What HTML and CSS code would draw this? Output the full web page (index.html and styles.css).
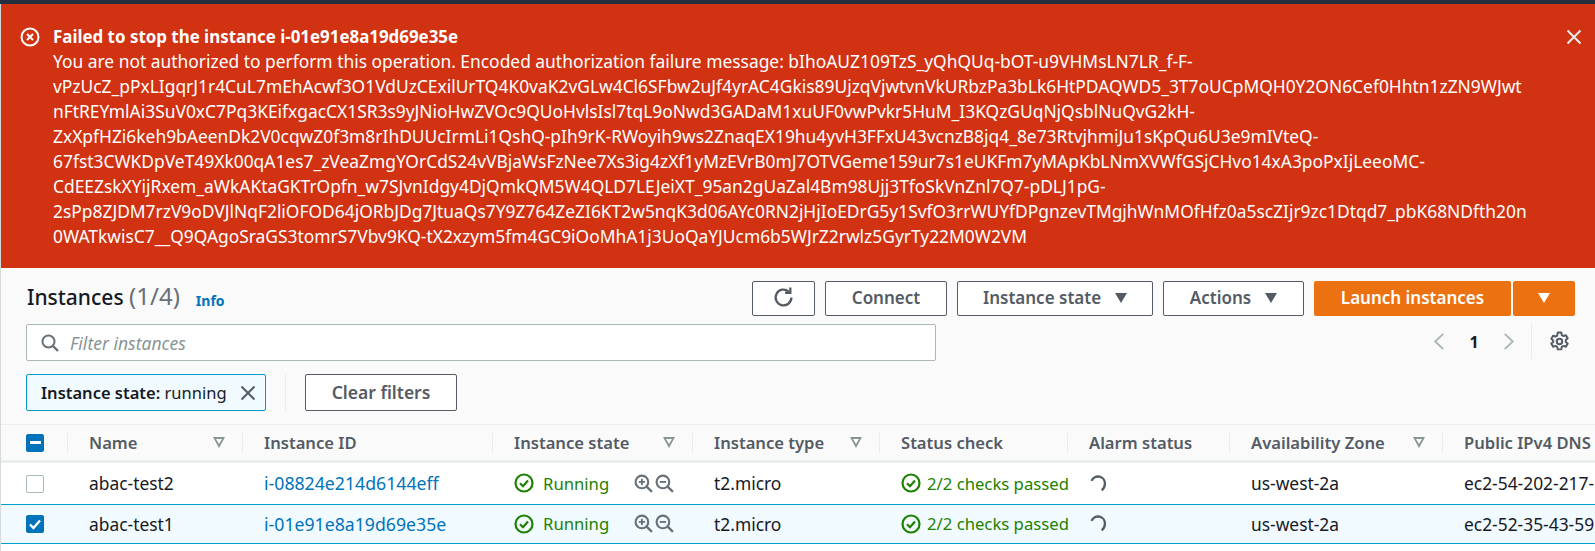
FILE: index.html
```html
<!DOCTYPE html>
<html>
<head>
<meta name="viewport" content="width=device-width, initial-scale=1">
<title>Instances</title>
<link rel="stylesheet" href="styles.css">
</head>
<body>

<div class="topbar"></div>

<div class="page">

  <!-- error flash -->
  <div class="flash">
    <svg class="flash-icon" viewBox="0 0 20 20"><circle cx="10" cy="10" r="8.500" fill="none" stroke="#fff" stroke-width="2"/><path d="M7 7l6 6M13 7l-6 6" fill="none" stroke="#fff" stroke-width="2"/></svg>
    <div class="flash-body">
      <div class="flash-title">Failed to stop the instance i-01e91e8a19d69e35e</div>
      <div class="flash-text">You are not authorized to perform this operation. Encoded authorization failure message: bIhoAUZ109TzS_yQhQUq-bOT-u9VHMsLN7LR_f-F-<br>vPzUcZ_pPxLIgqrJ1r4CuL7mEhAcwf3O1VdUzCExilUrTQ4K0vaK2vGLw4Cl6SFbw2uJf4yrAC4Gkis89UjzqVjwtvnVkURbzPa3bLk6HtPDAQWD5_3T7oUCpMQH0Y2ON6Cef0Hhtn1zZN9WJwt<br>nFtREYmlAi3SuV0xC7Pq3KEifxgacCX1SR3s9yJNioHwZVOc9QUoHvlsIsl7tqL9oNwd3GADaM1xuUF0vwPvkr5HuM_I3KQzGUqNjQsblNuQvG2kH-<br>ZxXpfHZi6keh9bAeenDk2V0cqwZ0f3m8rIhDUUcIrmLi1QshQ-pIh9rK-RWoyih9ws2ZnaqEX19hu4yvH3FFxU43vcnzB8jq4_8e73RtvjhmiJu1sKpQu6U3e9mIVteQ-<br>67fst3CWKDpVeT49Xk00qA1es7_zVeaZmgYOrCdS24vVBjaWsFzNee7Xs3ig4zXf1yMzEVrB0mJ7OTVGeme159ur7s1eUKFm7yMApKbLNmXVWfGSjCHvo14xA3poPxIjLeeoMC-<br>CdEEZskXYijRxem_aWkAKtaGKTrOpfn_w7SJvnIdgy4DjQmkQM5W4QLD7LEJeiXT_95an2gUaZal4Bm98Ujj3TfoSkVnZnl7Q7-pDLJ1pG-<br>2sPp8ZJDM7rzV9oDVJlNqF2liOFOD64jORbJDg7JtuaQs7Y9Z764ZeZI6KT2w5nqK3d06AYc0RN2jHjIoEDrG5y1SvfO3rrWUYfDPgnzevTMgjhWnMOfHfz0a5scZIjr9zc1Dtqd7_pbK68NDfth20n<br>0WATkwisC7__Q9QAgoSraGS3tomrS7Vbv9KQ-tX2xzym5fm4GC9iOoMhA1j3UoQaYJUcm6b5WJrZ2rwlz5GyrTy22M0W2VM</div>
    </div>
    <svg class="flash-close" viewBox="0 0 16 16"><path d="M1.500 1.500l13 13M14.500 1.500l-13 13" fill="none" stroke="#eaeded" stroke-width="2"/></svg>
  </div>

  <!-- instances panel -->
  <div class="panel-head">
    <div class="title-row">
      <h1 class="title">Instances <span class="count">(1/4)</span></h1>
      <a class="info">Info</a>
      <div class="actions">
        <button class="btn btn-refresh"><svg viewBox="0 0 20 20" class="ico-20"><path d="M17.500 10a7.500 7.500 0 1 1-2.400-5.500" fill="none" stroke="#545b64" stroke-width="2.200"/><path d="M16.500 .5v5h-5" fill="none" stroke="#545b64" stroke-width="2.200"/></svg></button>
        <button class="btn btn-connect">Connect</button>
        <button class="btn btn-state">Instance state <span class="caret"></span></button>
        <button class="btn btn-actions">Actions <span class="caret"></span></button>
        <button class="btn-orange btn-launch">Launch instances</button>
        <button class="btn-orange btn-split"><span class="caret caret-white"></span></button>
      </div>
    </div>

    <div class="filter-row">
      <div class="search">
        <svg class="ico-search" viewBox="0 0 18 18"><circle cx="7.500" cy="7.500" r="6" fill="none" stroke="#687078" stroke-width="2"/><path d="M12 12l5 5" stroke="#687078" stroke-width="2.400"/></svg>
        <input type="text" placeholder="Filter instances">
      </div>
      <div class="pager">
        <svg class="chev" viewBox="0 0 12 20"><path d="M10.500 2L2 10l8.500 8" fill="none" stroke="#aab7b8" stroke-width="2"/></svg>
        <span class="page-no">1</span>
        <svg class="chev" viewBox="0 0 12 20"><path d="M1.500 2L10 10l-8.500 8" fill="none" stroke="#aab7b8" stroke-width="2"/></svg>
        <span class="pager-sep"><svg class="gear" viewBox="0 0 20 20"><path d="M8.300 1.500h3.400l.5 2.400 1.600.9 2.300-.8 1.700 3-1.800 1.600v1.800l1.800 1.600-1.700 3-2.300-.8-1.600.9-.5 2.400H8.300l-.5-2.400-1.600-.9-2.300.8-1.700-3 1.800-1.600V9.100L2.200 7.500l1.700-3 2.300.8 1.600-.9z" fill="none" stroke="#545b64" stroke-width="1.900" stroke-linejoin="round"/><circle cx="10" cy="10" r="2.600" fill="none" stroke="#545b64" stroke-width="1.900"/></svg></span>
      </div>
    </div>

    <div class="chip-row">
      <div class="chip"><span><b>Instance state:</b> running</span>
        <svg class="chip-x" viewBox="0 0 16 16"><path d="M1.500 1.500l13 13M14.500 1.500l-13 13" fill="none" stroke="#545b64" stroke-width="2"/></svg>
      </div>
      <span class="chip-sep"></span>
      <button class="btn btn-clear">Clear filters</button>
    </div>
  </div>

  <div class="table-wrap">
    <table class="grid">
      <colgroup>
        <col class="c-check"><col class="c-name"><col class="c-id"><col class="c-state"><col class="c-type"><col class="c-status"><col class="c-alarm"><col class="c-az"><col class="c-dns">
      </colgroup>
      <thead>
        <tr>
          <th class="check-cell"><span class="box box-mixed"><span class="dash"></span></span></th>
          <th><div class="th-in">Name <span class="sort"></span></div></th>
          <th><div class="th-in">Instance ID</div></th>
          <th><div class="th-in">Instance state <span class="sort"></span></div></th>
          <th><div class="th-in">Instance type <span class="sort"></span></div></th>
          <th><div class="th-in">Status check</div></th>
          <th><div class="th-in">Alarm status</div></th>
          <th><div class="th-in">Availability Zone <span class="sort"></span></div></th>
          <th><div class="th-in">Public IPv4 DNS</div></th>
        </tr>
      </thead>
      <tbody>
        <tr>
          <td class="check-cell"><span class="box"></span></td>
          <td>abac-test2</td>
          <td><a class="link">i-08824e214d6144eff</a></td>
          <td><div class="ok-state"><svg class="ico-ok" viewBox="0 0 20 20"><use href="#ok"/></svg>Running<span class="zooms"><svg class="ico-zoom" viewBox="0 0 18 18"><use href="#zoom-in"/></svg><svg class="ico-zoom" viewBox="0 0 18 18"><use href="#zoom-out"/></svg></span></div></td>
          <td>t2.micro</td>
          <td><div class="ok-check"><svg class="ico-ok" viewBox="0 0 20 20"><use href="#ok"/></svg>2/2 checks passed</div></td>
          <td><svg class="ico-spin" viewBox="0 0 16 16"><use href="#spin"/></svg></td>
          <td>us-west-2a</td>
          <td>ec2-54-202-217-</td>
        </tr>
        <tr class="selected">
          <td class="check-cell"><span class="box box-on"><svg viewBox="0 0 18 18"><path d="M4 9.500l3.500 3.500L14 5.500" fill="none" stroke="#fff" stroke-width="2.400"/></svg></span></td>
          <td>abac-test1</td>
          <td><a class="link">i-01e91e8a19d69e35e</a></td>
          <td><div class="ok-state"><svg class="ico-ok" viewBox="0 0 20 20"><use href="#ok"/></svg>Running<span class="zooms"><svg class="ico-zoom" viewBox="0 0 18 18"><use href="#zoom-in"/></svg><svg class="ico-zoom" viewBox="0 0 18 18"><use href="#zoom-out"/></svg></span></div></td>
          <td>t2.micro</td>
          <td><div class="ok-check"><svg class="ico-ok" viewBox="0 0 20 20"><use href="#ok"/></svg>2/2 checks passed</div></td>
          <td><svg class="ico-spin" viewBox="0 0 16 16"><use href="#spin"/></svg></td>
          <td>us-west-2a</td>
          <td>ec2-52-35-43-59</td>
        </tr>
      </tbody>
    </table>
  </div>
</div>

<svg class="defs" width="0" height="0">
  <symbol id="ok" viewBox="0 0 20 20"><circle cx="10" cy="10" r="8.500" fill="none" stroke="#1d8102" stroke-width="2.200"/><path d="M6 10.200l3 3 5-5.700" fill="none" stroke="#1d8102" stroke-width="2.200"/></symbol>
  <symbol id="zoom-in" viewBox="0 0 18 18"><circle cx="7.500" cy="7.500" r="6" fill="none" stroke="#687078" stroke-width="2"/><path d="M12 12l5 5" stroke="#687078" stroke-width="2.200"/><path d="M4.500 7.500h6M7.500 4.500v6" stroke="#687078" stroke-width="1.800"/></symbol>
  <symbol id="zoom-out" viewBox="0 0 18 18"><circle cx="7.500" cy="7.500" r="6" fill="none" stroke="#687078" stroke-width="2"/><path d="M12 12l5 5" stroke="#687078" stroke-width="2.200"/><path d="M4.500 7.500h6" stroke="#687078" stroke-width="1.800"/></symbol>
  <symbol id="spin" viewBox="0 0 16 16"><path d="M1.500 5.500A6.500 6.500 0 0 1 14 8.500c0 2.500-1.200 4.500-3 5.800" fill="none" stroke="#545b64" stroke-width="2.200"/></symbol>
</svg>

</body>
</html>
```

FILE: styles.css
```css
* {
  box-sizing: border-box;
}

html, body {
  margin: 0;
  height: 551px;
  overflow: hidden;
}

body {
  font-family: "Noto Sans", "Liberation Sans", sans-serif;
  font-size: 17.400px;
  color: #16191f;
  background: #fff;
}

.topbar {
  height: 4px;
  background: #232f3e;
}

.page {
  border-left: 1px solid #d5dbdb;
}

/* Error flash */
.flash {
  display: flex;
  height: 264px;
  padding: 20px 13px 0 19px;
  background: #d13212;
  color: #fff;
}

.flash-icon {
  width: 20px;
  height: 20px;
  margin-top: 3px;
  flex: none;
}

.flash-body {
  flex: 1;
  margin-left: 13px;
  white-space: nowrap;
  line-height: 25px;
}

.flash-title {
  font-size: 16.900px;
  font-weight: 700;
}

.flash-close {
  width: 16px;
  height: 16px;
  margin-top: 5px;
  flex: none;
}

/* Panel header */
.panel-head {
  height: 156px;
  padding: 13px 20px 0 25px;
  background: #fafafa;
}

.title-row {
  display: flex;
  align-items: center;
  height: 35px;
}

.title {
  margin: 0 0 4px 1px;
  font-size: 21px;
  font-weight: 500;
  line-height: 30px;
}

.count {
  font-size: 24px;
  font-weight: 400;
  color: #687078;
}

.info {
  margin-left: 16px;
  margin-top: 4px;
  font-size: 14px;
  font-weight: 700;
  color: #0073bb;
}

.actions {
  display: flex;
  gap: 10px;
  margin-left: auto;
}

.btn {
  display: inline-flex;
  align-items: center;
  justify-content: center;
  height: 35px;
  padding: 0 0 2px;
  border: 1px solid #545b64;
  border-radius: 2px;
  background: #fff;
  font-family: inherit;
  font-size: 17px;
  font-weight: 600;
  color: #545b64;
}

.btn-refresh { width: 63px; }
.btn-connect { width: 122px; }
.btn-state { width: 196px; }
.btn-actions { width: 141px; }

.ico-20 {
  width: 21px;
  height: 21px;
}

.caret {
  width: 0;
  height: 0;
  margin-left: 14px;
  border-left: 6.500px solid transparent;
  border-right: 6.500px solid transparent;
  border-top: 10px solid #545b64;
}

.caret-white {
  margin: 0;
  border-top-color: #fff;
}

.btn-orange {
  height: 35px;
  padding: 0 0 2px;
  border: none;
  border-radius: 2px;
  background: #ec7211;
  font-family: inherit;
  font-size: 17px;
  font-weight: 600;
  color: #fff;
}

.btn-launch { width: 197px; }

.btn-split {
  display: inline-flex;
  align-items: center;
  justify-content: center;
  width: 62px;
  margin-left: -8px;
}

.filter-row {
  display: flex;
  justify-content: space-between;
  margin-top: 8px;
}

.search {
  display: flex;
  align-items: center;
  width: 910px;
  height: 37px;
  padding-left: 14px;
  border: 1px solid #aab7b8;
  border-radius: 2px;
  background: #fff;
}

.ico-search {
  width: 18px;
  height: 18px;
  flex: none;
}

.search input {
  flex: 1;
  margin-left: 11px;
  padding: 0;
  border: none;
  outline: none;
  font-family: inherit;
  font-size: 17.500px;
  background: transparent;
}

.search input::placeholder {
  font-style: italic;
  color: #879596;
  opacity: 1;
}

.pager {
  display: flex;
  align-items: center;
  height: 35px;
}

.chev {
  width: 12px;
  height: 19px;
}

.page-no {
  width: 58px;
  text-align: center;
  font-size: 16px;
  font-weight: 700;
}

.pager-sep {
  display: flex;
  align-items: center;
  height: 35px;
  margin-left: 16px;
  padding: 0 5px 0 17px;
  border-left: 1px solid #eaeded;
}

.gear {
  width: 21px;
  height: 21px;
}

.chip-row {
  display: flex;
  align-items: center;
  margin-top: 13px;
}

.chip {
  display: flex;
  align-items: center;
  width: 240px;
  height: 37px;
  padding-left: 14px;
  border: 1px solid #0099cc;
  border-radius: 2px;
  background: #f1faff;
  font-size: 16.500px;
  white-space: nowrap;
}

.chip b {
  font-weight: 600;
}

.chip-x {
  width: 16px;
  height: 16px;
  margin-left: auto;
  margin-right: 9px;
}

.chip-sep {
  width: 1px;
  height: 37px;
  margin: 0 19px;
  background: #eaeded;
}

.btn-clear {
  width: 152px;
  height: 37px;
  font-size: 17.500px;
}

/* Table */
.table-wrap {
  overflow: hidden;
  height: 127px;
  border-top: 1px solid #eaeded;
}

.grid {
  width: 1660px;
  table-layout: fixed;
  border-collapse: separate;
  border-spacing: 0;
}

.c-check { width: 66px; }
.c-name { width: 175px; }
.c-id { width: 250px; }
.c-state { width: 200px; }
.c-type { width: 187px; }
.c-status { width: 188px; }
.c-alarm { width: 162px; }
.c-az { width: 213px; }
.c-dns { width: 219px; }

.grid th {
  height: 38px;
  padding: 0;
  border-bottom: 3px solid #eaeded;
  background: #fafafa;
  text-align: left;
  font-size: 16.600px;
  font-weight: 600;
  color: #545b64;
}

.th-in {
  display: flex;
  align-items: center;
  justify-content: space-between;
  height: 20px;
  padding: 0 17px 0 21px;
  border-left: 1px solid #eaeded;
  white-space: nowrap;
}

.sort {
  width: 0;
  height: 0;
  border-left: 6.500px solid transparent;
  border-right: 6.500px solid transparent;
  border-top: 11px solid #879596;
  position: relative;
}

/* hollow centre of the sort triangle */
.sort::after {
  content: "";
  position: absolute;
  left: -3px;
  top: -9px;
  border-left: 3px solid transparent;
  border-right: 3px solid transparent;
  border-top: 5px solid #fafafa;
}

.grid td {
  height: 41px;
  padding: 0 0 1px 22px;
  white-space: nowrap;
}

.grid .check-cell {
  padding: 0 0 0 25px;
}

.grid tr.selected td {
  height: 40px;
  background: #f1faff;
  border-top: 1px solid #00a1c9;
  border-bottom: 1px solid #00a1c9;
}

.box {
  display: block;
  width: 18px;
  height: 18px;
  border: 1px solid #aab7b8;
  border-radius: 2px;
  background: #fff;
}

.box-on,
.box-mixed {
  display: flex;
  align-items: center;
  justify-content: center;
  border-color: #0073bb;
  background: #0073bb;
}

.dash {
  width: 11px;
  height: 3px;
  background: #fff;
}

.box svg {
  flex: none;
  width: 18px;
  height: 18px;
}

.link {
  font-size: 17.700px;
  color: #0073bb;
}

.ok-state,
.ok-check {
  display: flex;
  align-items: center;
  font-size: 16.700px;
  color: #1d8102;
}

.ico-ok {
  width: 20px;
  height: 20px;
  flex: none;
  margin-right: 9px;
}

.ok-check .ico-ok {
  margin-right: 6px;
}

.zooms {
  display: flex;
  gap: 2px;
  margin-left: 25px;
}

.ico-zoom {
  width: 19px;
  height: 19px;
}

.ico-spin {
  display: block;
  width: 17px;
  height: 17px;
  margin-left: 1px;
}

.defs {
  position: absolute;
}
```
